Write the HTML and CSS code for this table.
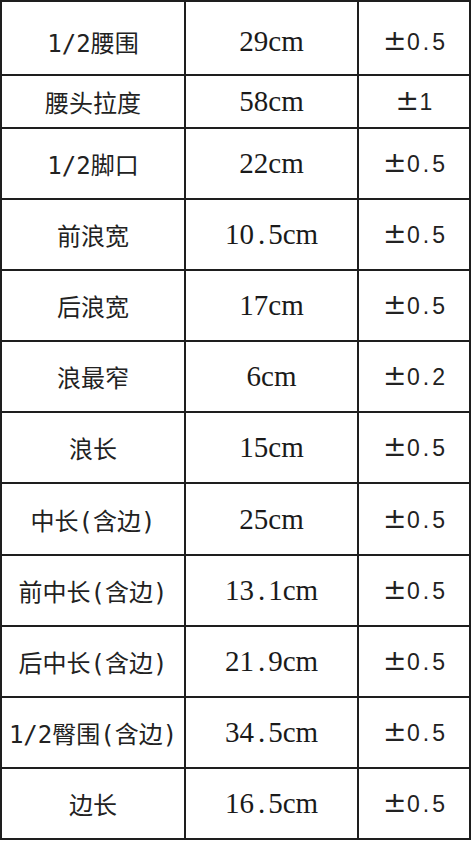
FILE: index.html
```html
<!DOCTYPE html>
<html lang="zh-CN">
<head>
<meta charset="utf-8">
<title>尺寸表</title>
<link rel="stylesheet" href="styles.css">
</head>
<body>
<table class="size-table">
  <colgroup>
    <col class="c-name">
    <col class="c-value">
    <col class="c-tol">
  </colgroup>
  <tbody>
    <tr class="row-first"><td class="name">1/2腰围</td><td class="value">29cm</td><td class="tol"><span class="pm">±</span>0<span class="dot">.</span>5</td></tr>
    <tr class="row-short"><td class="name">腰头拉度</td><td class="value">58cm</td><td class="tol"><span class="pm">±</span>1</td></tr>
    <tr><td class="name">1/2脚口</td><td class="value">22cm</td><td class="tol"><span class="pm">±</span>0<span class="dot">.</span>5</td></tr>
    <tr><td class="name">前浪宽</td><td class="value">10<span class="dot">.</span>5cm</td><td class="tol"><span class="pm">±</span>0<span class="dot">.</span>5</td></tr>
    <tr><td class="name">后浪宽</td><td class="value">17cm</td><td class="tol"><span class="pm">±</span>0<span class="dot">.</span>5</td></tr>
    <tr><td class="name">浪最窄</td><td class="value">6cm</td><td class="tol"><span class="pm">±</span>0<span class="dot">.</span>2</td></tr>
    <tr><td class="name">浪长</td><td class="value">15cm</td><td class="tol"><span class="pm">±</span>0<span class="dot">.</span>5</td></tr>
    <tr class="row-tall"><td class="name">中长(含边)</td><td class="value">25cm</td><td class="tol"><span class="pm">±</span>0<span class="dot">.</span>5</td></tr>
    <tr><td class="name">前中长(含边)</td><td class="value">13<span class="dot">.</span>1cm</td><td class="tol"><span class="pm">±</span>0<span class="dot">.</span>5</td></tr>
    <tr><td class="name">后中长(含边)</td><td class="value">21<span class="dot">.</span>9cm</td><td class="tol"><span class="pm">±</span>0<span class="dot">.</span>5</td></tr>
    <tr><td class="name">1/2臀围(含边)</td><td class="value">34<span class="dot">.</span>5cm</td><td class="tol"><span class="pm">±</span>0<span class="dot">.</span>5</td></tr>
    <tr><td class="name">边长</td><td class="value">16<span class="dot">.</span>5cm</td><td class="tol"><span class="pm">±</span>0<span class="dot">.</span>5</td></tr>
  </tbody>
</table>
</body>
</html>
```
FILE: styles.css
```css
html, body {
  margin: 0;
  padding: 0;
  background: #ffffff;
}

.size-table {
  border-collapse: collapse;
  table-layout: fixed;
  width: 471px;
  color: #1c1c1c;
}

.c-name { width: 184px; }
.c-value { width: 173px; }
.c-tol { width: 112px; }

.size-table td {
  border: 2px solid #1e1e1e;
  height: 69px;
  padding: 0;
  text-align: center;
  vertical-align: middle;
  white-space: nowrap;
}

.size-table tr.row-first td {
  height: 66px;
  padding-top: 6px;
}

.size-table tr.row-short td {
  height: 51px;
}

.size-table tr.row-tall td {
  height: 70px;
}

.name {
  font-family: "DejaVu Sans Mono", "Noto Sans CJK SC", monospace;
  font-size: 24px;
  color: #222;
}

.value {
  font-family: "Liberation Serif", serif;
  font-size: 29px;
  color: #1a1a1a;
}

.value .dot {
  padding: 0 3px 0 4px;
}

.tol {
  font-family: "Liberation Sans", sans-serif;
  font-size: 23px;
  color: #222;
}

.tol .dot {
  padding: 0 3px 0 3px;
}

.pm {
  display: inline-block;
  width: 24px;
  text-align: left;
  font-family: "DejaVu Sans", sans-serif;
  font-size: 28px;
  line-height: 1;
}
```
